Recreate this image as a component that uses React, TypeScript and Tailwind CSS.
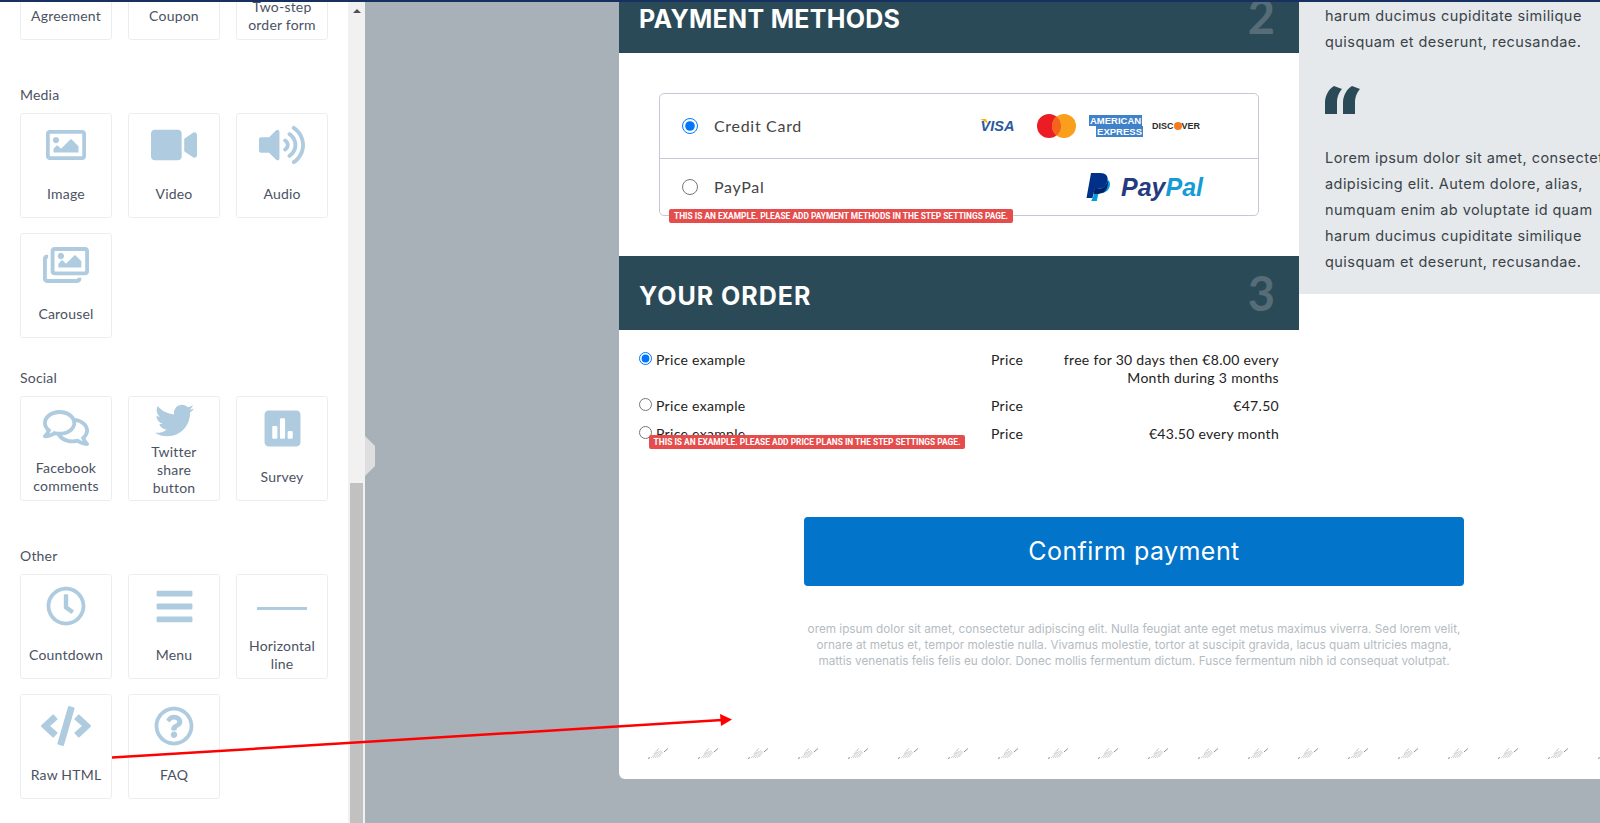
import type { ReactNode } from "react";
import {
  FaBars,
  FaCode,
  FaPoll,
  FaRegClock,
  FaRegComments,
  FaRegImage,
  FaRegImages,
  FaRegQuestionCircle,
  FaTwitter,
  FaVideo,
  FaVolumeUp,
} from "react-icons/fa";

type Block = { label: ReactNode; icon?: ReactNode; tight?: boolean };

const iconClass = "text-[#aecbe0]";

const BlockCard = ({ label, icon, tight }: Block) => (
  <div className={`h-[105px] rounded-[3px] border border-[#ebeef0] bg-white flex flex-col items-center ${tight ? "" : "pt-[8px]"}`}>
    <div className="h-[46px] w-full flex items-center justify-center shrink-0">{icon}</div>
    <div className={`${tight ? "h-[54px]" : "h-[48px] pt-[4px]"} w-full flex items-center justify-center text-center text-[14px] leading-[18px] tracking-[0.2px] text-[#4b5262]`}>
      <span>{label}</span>
    </div>
  </div>
);

const Section = ({ title, className, blocks }: { title: string; className: string; blocks: Block[] }) => (
  <div className={className}>
    <div className="h-[20px] mb-[8px] text-[14px] leading-[20px] tracking-[0.2px] text-[#4b5262]">{title}</div>
    <div className="grid grid-cols-[92px_92px_92px] gap-x-4 gap-y-[15px]">
      {blocks.map((b, i) => (
        <BlockCard key={i} {...b} />
      ))}
    </div>
  </div>
);

const Sidebar = () => (
  <div className="relative w-[365px] shrink-0 flex overflow-hidden bg-white">
    <div className="w-[348px] pl-5 -mt-[67px]">
      <div className="grid grid-cols-[92px_92px_92px] gap-x-4">
        <BlockCard label="Agreement" />
        <BlockCard label="Coupon" />
        <BlockCard label={<>Two-step<br />order form</>} />
      </div>
      <Section
        title="Media"
        className="mt-[45px]"
        blocks={[
          { label: "Image", icon: <FaRegImage size={40} className={iconClass} /> },
          { label: "Video", icon: <FaVideo size={46} className={iconClass} /> },
          { label: "Audio", icon: <FaVolumeUp size={46} className={iconClass} /> },
          { label: "Carousel", icon: <FaRegImages size={46} className={iconClass} /> },
        ]}
      />
      <Section
        title="Social"
        className="mt-[30px]"
        blocks={[
          { label: <>Facebook<br />comments</>, icon: <FaRegComments size={46} className={iconClass} /> },
          { label: <>Twitter<br />share<br />button</>, tight: true, icon: <FaTwitter size={39} className={iconClass} /> },
          { label: "Survey", icon: <FaPoll size={41} className={iconClass} /> },
        ]}
      />
      <Section
        title="Other"
        className="mt-[45px]"
        blocks={[
          { label: "Countdown", icon: <FaRegClock size={40} className={iconClass} /> },
          { label: "Menu", icon: <FaBars size={41} className={iconClass} /> },
          { label: <>Horizontal<br />line</>, icon: <div className="h-[3px] w-[50px] mt-1 bg-[#aecbe0]" /> },
          { label: "Raw HTML", icon: <FaCode size={50} className={iconClass} /> },
          { label: "FAQ", icon: <FaRegQuestionCircle size={40} className={iconClass} /> },
        ]}
      />
    </div>
    {/* scrollbar */}
    <div className="w-[17px] shrink-0 bg-[#f1f1f1] flex flex-col items-center">
      <div className="h-[481px] w-full flex justify-center pt-[7px]">
        <div className="h-0 w-0 border-x-[4px] border-b-[4px] border-x-transparent border-b-[#505050]" />
      </div>
      <div className="flex-1 w-[13px] bg-[#c1c1c1]" />
    </div>
  </div>
);

const SectionHeader = ({ title, num, className }: { title: string; num: string; className: string }) => (
  <div className="h-[74px] shrink-0 bg-[#2a4a58] flex items-center justify-between pl-[20px] pr-[24px]">
    <span className={`pt-[7px] text-[25px] font-bold text-white font-['Inter',sans-serif] ${className}`}>{title}</span>
    <span className="text-[47px] leading-none font-bold text-[#566d78] font-['Lato',sans-serif]">{num}</span>
  </div>
);

const Badge = ({ children, className }: { children: ReactNode; className: string }) => (
  <div className={`absolute h-[14px] rounded-[2px] bg-[#e54c4c] flex items-center justify-center text-[8.4px] font-bold uppercase text-white whitespace-nowrap font-['Roboto',sans-serif] ${className}`}>
    {children}
  </div>
);

const Radio = ({ checked, className }: { checked: boolean; className?: string }) => (
  <input type="radio" checked={checked} readOnly className={className} />
);

const CardLogos = () => (
  <div className="ml-auto mr-[60px] flex items-center tracking-normal">
    <div className="relative w-[35px] text-center text-[14.5px] italic font-bold leading-none text-[#2a5a9e] font-['Liberation_Sans',sans-serif]">
      <svg width="8" height="5" viewBox="0 0 8 5" className="absolute left-0 top-0">
        <path d="M0 0H6L8 5C6 3 3 1 0 0Z" fill="#f7b600" />
      </svg>
      VISA
    </div>
    <svg width="39" height="24" viewBox="0 0 39 24" className="ml-[22px]">
      <circle cx="12" cy="12" r="12" fill="#eb1c24" />
      <circle cx="27" cy="12" r="12" fill="#f99f1c" />
      <path d="M19.500 2.600a12 12 0 0 1 0 18.800a12 12 0 0 1 0-18.800z" fill="#f4641f" />
    </svg>
    <div className="ml-[13px] w-[54px] h-[22px] flex flex-col items-stretch font-['Liberation_Sans',sans-serif] font-bold text-[9.5px] leading-[11px] text-white">
      <span className="self-start bg-[#3f82c9] px-[1px]">AMERICAN</span>
      <span className="self-end bg-[#3f82c9] px-[1px]">EXPRESS</span>
    </div>
    <span className="ml-[9px] w-[46px] flex items-center text-[9px] font-bold leading-none text-[#2b2b2b] font-['Liberation_Sans',sans-serif] whitespace-nowrap">
      DISC<span className="shrink-0 w-[8px] h-[8px] rounded-full bg-[#f47b20]" />VER
    </span>
  </div>
);

const PayPalLogo = () => (
  <div className="ml-auto mr-[55px] flex items-center tracking-normal">
    <svg width="24" height="28" viewBox="0 0 24 28">
      <path d="M5 0H14C20 0 22.500 3.500 21.500 8C20.500 13 16.500 16 11.500 16H8.500L6.500 25H0.500Z" fill="#003087" />
      <path d="M21.600 6.500C24 8 24.500 11 23.500 14C22.300 18 18.500 20 14.500 20H12.500L10.800 28H5.200L6.500 25H6.900L8.500 16H11.500C16.500 16 20.500 13 21.600 6.500Z" fill="#009cde" />
      <path d="M21.500 7.500C20.500 13 16.500 16 11.500 16H8.500L7.400 21H12.800L14 20.500C18 20 20.500 18 21.800 12C22.200 10 22 8.500 21.500 7.500Z" fill="#012169" />
    </svg>
    <span className="ml-[11px] text-[25px] italic font-bold leading-none text-[#253b80] font-['Liberation_Sans',sans-serif]">
      Pay<span className="text-[#179bd7]">Pal</span>
    </span>
  </div>
);

const PriceRow = ({ right, radio }: { right: ReactNode; radio: boolean }) => (
  <>
    <div className="flex items-start gap-[4px]">
      <Radio checked={radio} className="mt-[1px]" />
      <span>Price example</span>
    </div>
    <div>Price</div>
    <div className="text-right whitespace-nowrap">{right}</div>
  </>
);

const Watermarks = () => (
  <div className="mt-[78px] pl-[29px] flex gap-[30px] overflow-hidden">
    {Array.from({ length: 20 }).map((_, i) => (
      <svg key={i} width="20" height="12" viewBox="0 0 20 12" className="shrink-0">
        <path d="M3 11L9 5M5 11L11 4M7 11L13 3M9 11L14 4M11 10L15 5M6 7L10 2M9 4L11 1" stroke="#d6d6d6" fill="none" />
        <path d="M0 11.500L2 10.500M16 5L20 1.500" stroke="#8f8f8f" fill="none" />
      </svg>
    ))}
  </div>
);

const Main = () => (
  <div className="flex-1 min-w-0 bg-[#a7b1b7] pl-[254px] overflow-hidden">
    <div className="-mt-[100px] bg-white rounded-bl-[6px] w-[981px]">
      <div className="flex">
        {/* left column */}
        <div className="w-[680px] shrink-0 pt-[77px]">
          <SectionHeader title="PAYMENT METHODS" num="2" className="tracking-[0.3px]" />
          <div className="h-[203px] pt-[40px] pl-[40px]">
            <div className="relative w-[600px] h-[123px] rounded-[5px] border border-[#c5c9d6] text-[16px] tracking-[0.7px] text-[#444444]">
              <div className="h-[65px] border-b border-[#c5c9d6] flex items-center pl-[22px]">
                <Radio checked className="w-[16px] h-[16px]" />
                <span className="ml-[16px]">Credit Card</span>
                <CardLogos />
              </div>
              <div className="h-[56px] flex items-center pl-[22px]">
                <Radio checked={false} className="w-[16px] h-[16px]" />
                <span className="ml-[16px]">PayPal</span>
                <PayPalLogo />
              </div>
              <Badge className="left-[9px] top-[115px] w-[344px] tracking-normal">This is an example. Please add payment methods in the step settings page.</Badge>
            </div>
          </div>
          <SectionHeader title="YOUR ORDER" num="3" className="tracking-[1px]" />
          <div className="relative pt-[21px] pb-[74px] pl-[20px] pr-[20px] grid grid-cols-[352px_69px_1fr] gap-y-[10px] text-[14px] leading-[18px] tracking-[0.3px] text-[#222222]">
            <PriceRow radio right={<>free for 30 days then €8.00 every<br />Month during 3 months</>} />
            <PriceRow radio={false} right="€47.50" />
            <PriceRow radio={false} right="€43.50 every month" />
            <Badge className="left-[30px] top-[105px] w-[316px] tracking-normal">This is an example. Please add price plans in the step settings page.</Badge>
          </div>
        </div>
        {/* testimonial panel */}
        <div className="w-[301px] self-start bg-[#e5e9ec] pl-[26px] pt-[23px] pb-[19px] overflow-hidden whitespace-nowrap text-[14.5px] leading-[26px] tracking-[0.44px] text-[#3a4348] font-['Inter',sans-serif]">
          <p>
            Lorem ipsum dolor sit amet, consectetur<br />adipisicing elit. Autem dolore, alias,<br />numquam enim ab voluptate id quam<br />harum ducimus cupiditate similique<br />quisquam et deserunt, recusandae.
          </p>
          <svg width="36" height="28" viewBox="0 0 36 28" className="mt-[31px] mb-[31px] block">
            <path d="M0 28V17C0 9 4 3 9 0L17 3C13 8 12 12 12 17V28ZM18 28V17C18 9 22 3 27 0L35 3C31 8 30 12 30 17V28Z" fill="#2a4a58" />
          </svg>
          <p>
            Lorem ipsum dolor sit amet, consectetur<br />adipisicing elit. Autem dolore, alias,<br />numquam enim ab voluptate id quam<br />harum ducimus cupiditate similique<br />quisquam et deserunt, recusandae.
          </p>
        </div>
      </div>
      {/* confirm */}
      <div className="pl-[185px] w-[845px]">
        <button className="w-[660px] h-[69px] rounded-[4px] bg-[#0274c9] text-white text-[25px] tracking-[0.45px] font-['Inter',sans-serif]">Confirm payment</button>
        <p className="mt-[35px] text-center whitespace-nowrap text-[11.75px] leading-[16px] text-[#b5bcc2] font-['Inter',sans-serif]">
          orem ipsum dolor sit amet, consectetur adipiscing elit. Nulla feugiat ante eget metus maximus viverra. Sed lorem velit,<br />
          ornare at metus et, tempor molestie nulla. Vivamus molestie, tortor at suscipit gravida, lacus quam ultricies magna,<br />
          mattis venenatis felis felis eu dolor. Donec mollis fermentum dictum. Fusce fermentum nibh id consequat volutpat.
        </p>
      </div>
      <Watermarks />
      <div className="h-[20px]" />
    </div>
  </div>
);

export default function App() {
  return (
    <div className="relative w-[1600px] h-[823px] overflow-hidden flex flex-col font-['Lato',sans-serif]">
      <div className="h-[2px] shrink-0 bg-[#16305f]" />
      <div className="flex flex-1 min-h-0">
        <Sidebar />
        <Main />
      </div>
      {/* collapse handle */}
      <svg width="10" height="40" viewBox="0 0 10 40" className="absolute left-[365px] top-[436px]">
        <path d="M0 0L10 10V30L0 40Z" fill="#dedede" />
      </svg>
      {/* annotation arrow */}
      <svg width="1600" height="823" viewBox="0 0 1600 823" className="absolute inset-0 pointer-events-none">
        <path d="M112 757.500L722 720" stroke="#ff0000" strokeWidth="2.500" fill="none" />
        <path d="M720 714L732 719.500L721 726Z" fill="#ff0000" />
      </svg>
    </div>
  );
}
